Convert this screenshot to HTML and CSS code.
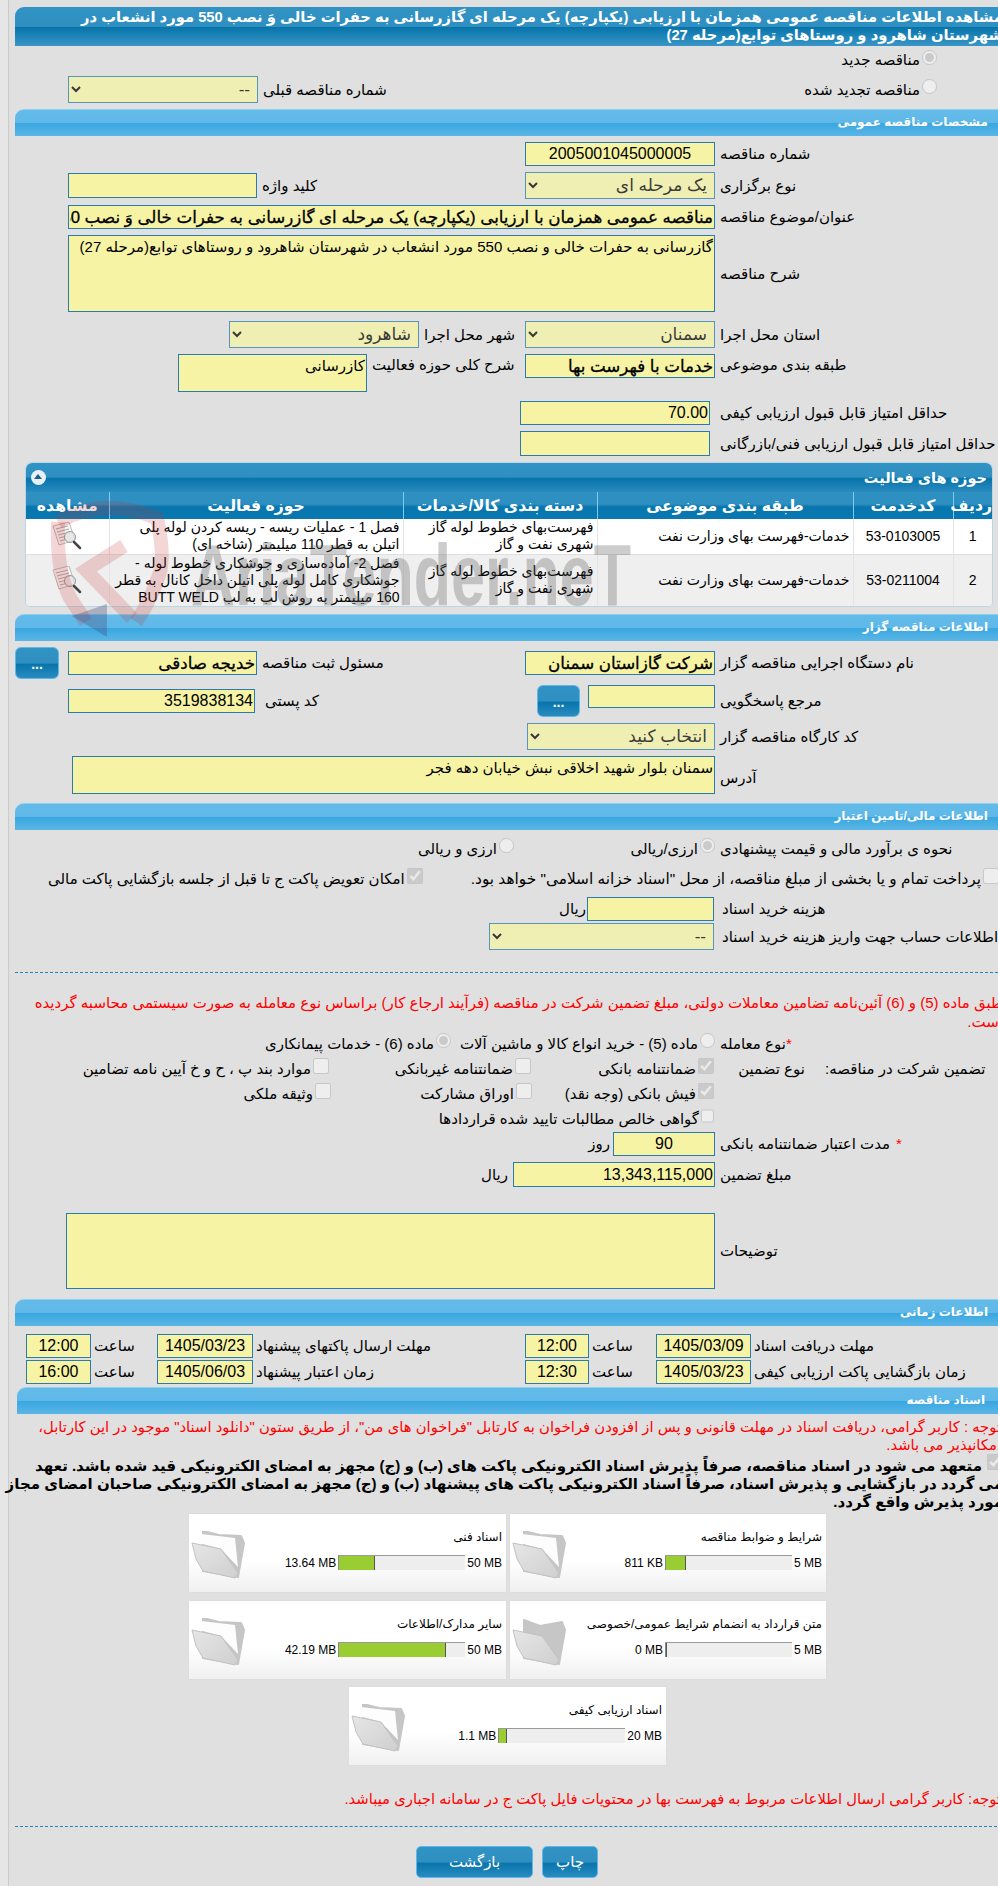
FILE: index.html
```html
<!DOCTYPE html>
<html lang="fa">
<head>
<meta charset="utf-8">
<title>مشاهده اطلاعات مناقصه</title>
<link rel="stylesheet" href="styles.css">
</head>
<body>
<svg class="defs" width="0" height="0">
  <linearGradient id="fg" x1="0" y1="0" x2="1" y2="1">
    <stop offset="0" stop-color="#e6e6e6"/>
    <stop offset="1" stop-color="#cfcfcf"/>
  </linearGradient>
  <symbol id="folder" viewBox="0 0 54 48">
    <path class="fo-back" d="M12 0 28 4 50 5 53 12 47 46 12 40Z"/>
    <path class="fo-page" d="M10 3 44 7 47 36 30 18 8 12Z"/>
    <path class="fo-front" d="M1 12 30 18 47 42 44 47 12 40 5 28Z"/>
  </symbol>
  <symbol id="folder2" viewBox="0 0 54 48">
    <path class="fo-back" d="M12 2 28 8 50 4 53 12 47 46 12 40Z"/>
    <path class="fo-front" d="M1 12 30 18 47 42 44 47 12 40 5 28Z"/>
  </symbol>
  <symbol id="doc" viewBox="0 0 30 28">
    <path class="doc-p" d="M1 4 17 0 23 18 7 23Z"/>
    <path class="doc-l" d="M4 7 16 4M5 10 17 7M6 13 18 10M7 16 13 14.500M8 19 14 17.500"/>
    <circle class="doc-g" cx="18" cy="15" r="5.500"/>
    <path class="doc-h" d="M22 20 28 26"/>
  </symbol>
</svg>
<div class="page">
  <h1 class="head" dir="rtl">مشاهده اطلاعات مناقصه عمومی همزمان با ارزیابی (یکپارچه) یک مرحله ای گازرسانی به حفرات خالی وَ نصب 550 مورد انشعاب در<br>شهرستان شاهرود و روستاهای توابع(مرحله 27)</h1>

  <div class="top-line mt6 h16">
    <span></span>
    <label class="choice"><input type="radio" name="n1" disabled checked><span>مناقصه جدید</span></label>
  </div>
  <div class="top-line mt8 h27">
    <div class="g"><select class="w190 h27" dir="rtl" disabled><option>--</option></select><span class="lb">شماره مناقصه قبلی</span></div>
    <label class="choice"><input type="radio" name="n1" disabled><span>مناقصه تجدید شده</span></label>
  </div>

  <div class="bar mt6">مشخصات مناقصه عمومی</div>

  <div class="row mt6 h24">
    <div class="f"><input class="w190 ctr end" readonly value="2005001045000005"></div>
    <span class="lb">شماره مناقصه</span>
  </div>
  <div class="row mt6 h27">
    <div class="f">
      <div class="g"><input class="w189 h25" readonly><span class="lb">کلید واژه</span></div>
      <select class="w190 h27 end" dir="rtl" disabled><option>یک مرحله ای</option></select>
    </div>
    <span class="lb">نوع برگزاری</span>
  </div>
  <div class="row mt6 h24">
    <div class="f"><input class="grow strong" dir="rtl" readonly value="مناقصه عمومی همزمان با ارزیابی (یکپارچه) یک مرحله ای گازرسانی به حفرات خالی وَ نصب 550 مورد انشعاب در شهرستان شاهرود و روستاهای توابع(مرحله 27)"></div>
    <span class="lb">عنوان/موضوع مناقصه</span>
  </div>
  <div class="row mt6 h77">
    <div class="f"><textarea class="grow h77" dir="rtl" readonly>گازرسانی به حفرات خالی و نصب 550 مورد انشعاب در شهرستان شاهرود و روستاهای توابع(مرحله 27)</textarea></div>
    <span class="lb">شرح مناقصه</span>
  </div>
  <div class="row mt9 h27">
    <div class="f">
      <div class="g ml161"><select class="w190 h27" dir="rtl" disabled><option>شاهرود</option></select><span class="lb">شهر محل اجرا</span></div>
      <select class="w190 h27 end" dir="rtl" disabled><option>سمنان</option></select>
    </div>
    <span class="lb">استان محل اجرا</span>
  </div>
  <div class="row mt6 h38 top">
    <div class="f">
      <div class="g ml110 top"><textarea class="w189 h38" dir="rtl" readonly>کازرسانی</textarea><span class="lb up">شرح کلی حوزه فعالیت</span></div>
      <input class="w190 end strong" dir="rtl" readonly value="خدمات با فهرست بها">
    </div>
    <span class="lb up">طبقه بندی موضوعی</span>
  </div>
  <div class="row mt9 h24">
    <div class="f"><input class="w190 end mr5" dir="rtl" readonly value="70.00"></div>
    <span class="lb">حداقل امتیاز قابل قبول ارزیابی کیفی</span>
  </div>
  <div class="row mt6 h25">
    <div class="f"><input class="w190 h25 end mr5" readonly></div>
    <span class="lb">حداقل امتیاز قابل قبول ارزیابی فنی/بازرگانی</span>
  </div>

  <section class="panel mt6">
    <div class="panel-head" dir="rtl"><span>حوزه های فعالیت</span><i class="collapse"></i></div>
    <table dir="rtl">
      <colgroup><col class="c1"><col class="c2"><col class="c3"><col class="c4"><col class="c5"><col class="c6"></colgroup>
      <thead><tr><th>ردیف</th><th>کدخدمت</th><th>طبقه بندی موضوعی</th><th>دسته بندی کالا/خدمات</th><th>حوزه فعالیت</th><th>مشاهده</th></tr></thead>
      <tbody>
        <tr class="r1"><td class="cc">1</td><td class="cc">53-0103005</td><td>خدمات-فهرست بهای وزارت نفت</td><td>فهرست‌بهای خطوط لوله گاز<br>شهری نفت و گاز</td><td>فصل 1 - عملیات ریسه - ریسه کردن لوله پلی<br>اتیلن به قطر 110 میلیمتر (شاخه ای)</td><td class="cc"><svg class="doc"><use href="#doc"/></svg></td></tr>
        <tr class="r2"><td class="cc">2</td><td class="cc">53-0211004</td><td>خدمات-فهرست بهای وزارت نفت</td><td>فهرست‌بهای خطوط لوله گاز<br>شهری نفت و گاز</td><td>فصل 2- آماده‌سازی و جوشکاری خطوط لوله -<br>جوشکاری کامل لوله پلی اتیلن داخل کانال به قطر<br>160 میلیمتر به روش لب به لب BUTT WELD</td><td class="cc"><svg class="doc"><use href="#doc"/></svg></td></tr>
      </tbody>
    </table>
  </section>

  <div class="bar mt7">اطلاعات مناقصه گزار</div>

  <div class="row mt6 h32">
    <div class="f nopad">
      <div class="g"><button class="dots w44">...</button><input class="w189 strong ml4" dir="rtl" readonly value="خدیجه صادقی"><span class="lb">مسئول ثبت مناقصه</span></div>
      <input class="w190 end strong" dir="rtl" readonly value="شرکت گازاستان سمنان">
    </div>
    <span class="lb">نام دستگاه اجرایی مناقصه گزار</span>
  </div>
  <div class="row mt6 h32">
    <div class="f">
      <div class="g"><input class="w187" dir="rtl" readonly value="3519838134"><span class="lb ml5">کد پستی</span></div>
      <div class="g end top gap8"><button class="dots w43">...</button><input class="w127 h23" readonly></div>
    </div>
    <span class="lb">مرجع پاسخگویی</span>
  </div>
  <div class="row mt6 h27">
    <div class="f"><select class="w188 h27 end" dir="rtl" disabled><option>انتخاب کنید</option></select></div>
    <span class="lb">کد کارگاه مناقصه گزار</span>
  </div>
  <div class="row mt6 h38">
    <div class="f pad57"><textarea class="grow h38" dir="rtl" readonly>سمنان بلوار شهید اخلاقی نبش خیابان دهه فجر</textarea></div>
    <span class="lb dn4">آدرس</span>
  </div>

  <div class="bar mt9">اطلاعات مالی/تامین اعتبار</div>

  <div class="row mt8 h20">
    <div class="f">
      <div class="choices end">
        <label class="choice ch201"><input type="radio" name="n2" disabled checked><span>ارزی/ریالی</span></label>
        <label class="choice"><input type="radio" name="n2" disabled><span>ارزی و ریالی</span></label>
      </div>
    </div>
    <span class="lb">نحوه ی برآورد مالی و قیمت پیشنهادی</span>
  </div>
  <div class="wide mt10 h22">
    <label class="choice"><input type="checkbox" disabled checked><span>امکان تعویض پاکت ج تا قبل از جلسه بازگشایی پاکت مالی</span></label>
    <label class="choice wider"><input type="checkbox" disabled><span>پرداخت تمام و یا بخشی از مبلغ مناقصه، از محل "اسناد خزانه اسلامی" خواهد بود.</span></label>
  </div>
  <div class="row mt7 h24">
    <div class="f"><div class="g end gap1 mr1"><span class="lb">ریال</span><input class="w127" readonly></div></div>
    <span class="lb pl2">هزینه خرید اسناد</span>
  </div>
  <div class="row mt2 h27">
    <div class="f"><select class="w225 h27 end mr1" dir="rtl" disabled><option>--</option></select></div>
    <span class="lb pl2">اطلاعات حساب جهت واریز هزینه خرید اسناد</span>
  </div>

  <hr class="dash mt22">

  <p class="warn mt20">طبق ماده (5) و (6) آئین‌نامه تضامین معاملات دولتی، مبلغ تضمین شرکت در مناقصه (فرآیند ارجاع کار) براساس نوع معامله به صورت سیستمی محاسبه گردیده<br>است.</p>

  <div class="row mt2 h20">
    <div class="f">
      <div class="choices end">
        <label class="choice ch264"><input type="radio" name="n3" disabled><span>ماده (5) - خرید انواع کالا و ماشین آلات</span></label>
        <label class="choice"><input type="radio" name="n3" disabled checked><span>ماده (6) - خدمات پیمانکاری</span></label>
      </div>
    </div>
    <span class="lb"><span class="star">*</span>نوع معامله</span>
  </div>

  <div class="gu mt4">
    <label class="choice pr2"><input type="checkbox" disabled><span>موارد بند پ ، ح و خ آیین نامه تضامین</span></label>
    <label class="choice pr1"><input type="checkbox" disabled><span>ضمانتنامه غیربانکی</span></label>
    <label class="choice"><input type="checkbox" disabled checked><span>ضمانتنامه بانکی</span></label>
    <span class="lb gu-t">نوع تضمین</span>
    <span class="lb gu-o">تضمین شرکت در مناقصه:</span>
  </div>
  <div class="gu mt1">
    <label class="choice"><input type="checkbox" disabled><span>وثیقه ملکی</span></label>
    <label class="choice"><input type="checkbox" disabled><span>اوراق مشارکت</span></label>
    <label class="choice"><input type="checkbox" disabled checked><span>فیش بانکی (وجه نقد)</span></label>
  </div>
  <div class="gu mt1">
    <span></span><span></span>
    <label class="choice"><input type="checkbox" disabled><span>گواهی خالص مطالبات تایید شده قراردادها</span></label>
  </div>

  <div class="row mt1 h24">
    <div class="f"><div class="g end gap3"><span class="lb">روز</span><input class="w102 ctr" readonly value="90"></div></div>
    <span class="lb"><span class="star s2">*</span>مدت اعتبار ضمانتنامه بانکی</span>
  </div>
  <div class="row mt6 h25">
    <div class="f"><div class="g end"><span class="lb">ریال</span><input class="w202 h25" dir="rtl" readonly value="13,343,115,000"></div></div>
    <span class="lb">مبلغ تضمین</span>
  </div>
  <div class="row mt26 h76">
    <div class="f pad51"><textarea class="grow h76" dir="rtl" readonly></textarea></div>
    <span class="lb">توضیحات</span>
  </div>

  <div class="bar mt10">اطلاعات زمانی</div>

  <div class="time mt8">
    <input readonly class="ctr" value="12:00"><span class="lb">ساعت</span>
    <input readonly class="ctr" value="1405/03/23"><span class="lb">مهلت ارسال پاکتهای پیشنهاد</span>
    <input readonly class="ctr" value="12:00"><span class="lb">ساعت</span>
    <input readonly class="ctr" value="1405/03/09"><span class="lb">مهلت دریافت اسناد</span>
  </div>
  <div class="time mt2">
    <input readonly class="ctr" value="16:00"><span class="lb">ساعت</span>
    <input readonly class="ctr" value="1405/06/03"><span class="lb">زمان اعتبار پیشنهاد</span>
    <input readonly class="ctr" value="12:30"><span class="lb">ساعت</span>
    <input readonly class="ctr" value="1405/03/23"><span class="lb">زمان بازگشایی پاکت ارزیابی کیفی</span>
  </div>

  <div class="bar bar5 mt3">اسناد مناقصه</div>

  <p class="warn note mt4">توجه : کاربر گرامی، دریافت اسناد در مهلت قانونی و پس از افزودن فراخوان به کارتابل "فراخوان های من"، از طریق ستون "دانلود اسناد" موجود در این کارتابل،<br>امکانپذیر می باشد.</p>

  <div class="pledge mt3" dir="rtl"><input type="checkbox" disabled checked>متعهد می شود در اسناد مناقصه، صرفاً پذیرش اسناد الکترونیکی پاکت های (ب) و (ج) مجهز به امضای الکترونیکی قید شده باشد. تعهد<br>می گردد در بازگشایی و پذیرش اسناد، صرفاً اسناد الکترونیکی پاکت های پیشنهاد (ب) و (ج) مجهز به امضای الکترونیکی صاحبان امضای مجاز<br>مورد پذیرش واقع گردد.</div>

  <div class="cards mt3">
    <article class="card w317">
      <svg class="folder"><use href="#folder"/></svg>
      <div class="card-b"><div class="t" dir="rtl">اسناد فنی</div>
        <div class="prog"><span>13.64 MB</span><div class="track"><div class="fill" style="width:37px"></div></div><span>50 MB</span></div></div>
    </article>
    <article class="card">
      <svg class="folder"><use href="#folder"/></svg>
      <div class="card-b"><div class="t" dir="rtl">شرایط و ضوابط مناقصه</div>
        <div class="prog"><span>811 KB</span><div class="track"><div class="fill" style="width:21px"></div></div><span>5 MB</span></div></div>
    </article>
  </div>
  <div class="cards mt9">
    <article class="card w317">
      <svg class="folder"><use href="#folder"/></svg>
      <div class="card-b"><div class="t" dir="rtl">سایر مدارک/اطلاعات</div>
        <div class="prog"><span>42.19 MB</span><div class="track"><div class="fill" style="width:108px"></div></div><span>50 MB</span></div></div>
    </article>
    <article class="card">
      <svg class="folder"><use href="#folder2"/></svg>
      <div class="card-b"><div class="t" dir="rtl">متن قرارداد به انضمام شرایط عمومی/خصوصی</div>
        <div class="prog"><span>0 MB</span><div class="track"><div class="fill" style="width:0"></div></div><span>5 MB</span></div></div>
    </article>
  </div>
  <div class="cards mt8">
    <article class="card w317">
      <svg class="folder"><use href="#folder"/></svg>
      <div class="card-b"><div class="t" dir="rtl">اسناد ارزیابی کیفی</div>
        <div class="prog"><span>1.1 MB</span><div class="track"><div class="fill" style="width:9px"></div></div><span>20 MB</span></div></div>
    </article>
  </div>

  <p class="warn note mt25">توجه: کاربر گرامی ارسال اطلاعات مربوط به فهرست بها در محتویات فایل پاکت ج در سامانه اجباری میباشد.</p>

  <hr class="dash dash2 mt18">

  <div class="actions mt19">
    <button class="act w117">بازگشت</button>
    <button class="act w56">چاپ</button>
  </div>
</div>

<svg class="wm" viewBox="0 0 998 660" aria-hidden="true">
  <path class="wm-r" d="M58 522Q103 496 157 518Q166 560 158 578Q150 602 136 622"/>
  <path class="wm-r" d="M58 522Q56 570 70 598L86 622"/>
  <path class="wm-r" d="M124 546 86 570 132 618"/>
  <path class="wm-a" d="M72 616 107 604 107 637Z"/>
  <text class="wm-t" x="191" y="605" textLength="440" lengthAdjust="spacingAndGlyphs">AriaTender.neT</text>
</svg>
</body>
</html>
```
FILE: styles.css
```css
html, body { margin: 0; padding: 0; }
html { overflow: hidden; }
body {
  position: relative;
  width: 998px;
  height: 1886px;
  overflow: hidden;
  background: #e0e0e0;
  color: #000;
  font: 15px "Liberation Sans", "DejaVu Sans", sans-serif;
}
body::before {
  content: "";
  position: absolute;
  left: 0; top: 0; bottom: 0;
  width: 8px;
  background: #e6e6e6;
  border-right: 1px solid #cbcbcb;
}
.defs { position: absolute; }
.page { position: relative; margin-left: 15px; width: 988px; padding-top: 7px; }

/* spacing helpers */
.mt1{margin-top:1px}.mt2{margin-top:2px}.mt3{margin-top:3px}.mt4{margin-top:4px}.mt6{margin-top:6px}.mt7{margin-top:7px}.mt8{margin-top:8px}.mt9{margin-top:9px}.mt10{margin-top:10px}.mt18{margin-top:18px}.mt19{margin-top:19px}.mt20{margin-top:20px}.mt22{margin-top:22px}.mt25{margin-top:25px}.mt26{margin-top:26px}
.h16{height:16px}.h20{height:20px}.h22{height:22px}.h23{height:23px}.h24{height:24px}.h25{height:25px}.h27{height:27px}.h32{height:32px}.h38{height:38px}.h76{height:76px}.h77{height:77px}
.w102{width:102px}.w127{width:127px}.w187{width:187px}.w188{width:188px}.w189{width:189px}.w190{width:190px}.w202{width:202px}.w225{width:225px}
.ml4{margin-left:4px}.ml5{margin-left:5px}.ml110{margin-left:110px}.ml161{margin-left:161px}
.mr1{margin-right:1px}.mr5{margin-right:5px}

.head {
  margin: 0;
  height: 39px;
  border-top-left-radius: 9px;
  background: linear-gradient(#3192c4 0, #2e8fc0 50%, #0674ab 52%, #3a96c6 100%);
  color: #fff;
  font-size: 14.750px;
  font-weight: 700;
  line-height: 18px;
  padding-top: 1px;
  box-sizing: border-box;
  white-space: nowrap;
  text-align: right;
}
.bar {
  height: 27px;
  box-sizing: border-box;
  border-top-left-radius: 9px;
  border-top: 1px solid #8cd0f2;
  background: linear-gradient(#63bbe9 0, #5fb8e8 48%, #39a7e0 52%, #5bb6e6 100%);
  color: #fff;
  font-size: 12px;
  font-weight: 700;
  line-height: 24px;
  direction: rtl;
  padding-right: 15px;
}
.bar5 { margin-left: 2px; padding-right: 18px; }

.top-line { display: flex; justify-content: space-between; align-items: center; padding: 0 66px 0 53px; }
.row { display: grid; grid-template-columns: 700px max-content; column-gap: 5px; align-items: center; }
.row.top { align-items: start; }
.f { display: flex; align-items: center; padding-left: 53px; }
.f.nopad { padding-left: 0; }
.f.pad57 { padding-left: 57px; }
.f.pad51 { padding-left: 51px; }
.g { display: flex; align-items: center; gap: 5px; }
.g.top, .row.top .f { align-items: flex-start; }
.gap1 { gap: 1px; }
.gap3 { gap: 3px; }
.gap8 { gap: 8px; }
.end { margin-left: auto; }
.grow { flex: 1; min-width: 0; }

.lb { direction: rtl; text-align: left; white-space: nowrap; line-height: 20px; font-size: 15px; }
.lb.up { margin-top: 1px; }
.lb.dn4 { position: relative; top: 3px; }
.pl2 { padding-left: 2px; }
.star { color: #f00; }
.s2 { margin-left: 6px; }

input, select, textarea {
  box-sizing: border-box;
  margin: 0;
  font: 16px "Liberation Sans", "DejaVu Sans", sans-serif;
  color: #000;
  background: #f6f4a4;
  border: 1px solid #2b7cae;
  border-radius: 0;
  padding: 0 1px;
  outline: none;
}
input:not([type]) , input.ctr { height: 24px; }
input.h25 { height: 25px; }
input.h23 { height: 23px; }
input.grow { height: 24px; }
.ctr { text-align: center; }
.strong { -webkit-text-stroke: .3px #000; font-size: 16.700px; }
select { padding: 0 3px; font-size: 17px; }
select:disabled { color: #000; opacity: .75; }
textarea { resize: none; overflow: hidden; font-size: 15px; padding: 1px; line-height: 19px; }

.choice { display: flex; align-items: center; direction: rtl; white-space: nowrap; gap: 2px; font-size: 15px; }
.choice input[type=radio] { width: 15px; height: 15px; margin: 0 0 6px 0; }
.choice input[type=checkbox] { width: 16px; height: 16px; margin: 0 0 6px 0; }
.choice.wider { font-size: 15.350px; }
.choices { display: flex; direction: rtl; }
.ch201 { width: 201px; }
.ch264 { width: 264px; }
.wide { display: flex; justify-content: space-between; padding: 0 4px 0 33px; align-items: center; }

.panel {
  margin-left: 10px;
  width: 968px;
  box-sizing: border-box;
  border: 1px solid #b9d6e6;
  border-radius: 7px 7px 5px 5px;
  overflow: hidden;
  background: #fff;
}
.panel-head {
  height: 29px;
  background: linear-gradient(#3192c4 0, #2e8fc0 48%, #0674ab 54%, #2a8bbf 100%);
  color: #fff;
  font-weight: 700;
  font-size: 14.500px;
  display: flex;
  justify-content: space-between;
  align-items: center;
  padding: 0 5px 0 5px;
}
.collapse {
  width: 15px; height: 15px;
  border-radius: 50%;
  background: #e6f0f5;
  position: relative;
}
.collapse::after {
  content: "";
  position: absolute;
  left: 3px; top: 4px;
  border: 4.500px solid transparent;
  border-top: 0;
  border-bottom: 5px solid #1b5e86;
}
table { border-collapse: collapse; width: 100%; table-layout: fixed; font-size: 14px; }
.c1{width:39px}.c2{width:100px}.c3{width:256px}.c4{width:194px}.c5{width:294px}.c6{width:auto}
th {
  height: 27px;
  padding: 0;
  background: linear-gradient(#2f90c2 0, #2e8ec0 45%, #0876ae 55%, #0a78b0 100%);
  color: #fff;
  font-size: 15.700px;
  font-weight: 700;
  border-left: 1px solid #7fcdee;
}
th:last-child { border-left: 0; }
td {
  padding: 0 3px;
  line-height: 17px;
  border-left: 1px solid #e4e4e4;
  text-align: right;
  white-space: nowrap;
}
td:last-child { border-left: 0; }
td.cc { text-align: center; padding: 0; }
.r1 { background: #fff; height: 35px; }
.r2 { background: #efefef; height: 52px; border-top: 1px solid #e0e0e0; }
.doc { width: 30px; height: 28px; display: block; margin: 0 auto; }
.doc-p { fill: #f6f6f6; stroke: #aaa; stroke-width: .8; }
.doc-l { stroke: #aaa; stroke-width: 1; fill: none; }
.doc-g { fill: rgba(225,225,225,.7); stroke: #9a9a9a; stroke-width: 1; }
.doc-h { stroke: #444; stroke-width: 2.500; stroke-linecap: round; }

.dots, .act {
  box-sizing: border-box;
  border: 1px solid #5cb8e8;
  border-radius: 6px;
  background: linear-gradient(#3192c4 0, #2e8fc0 50%, #0875ac 54%, #2a8bbf 100%);
  color: #fff;
  font: 700 14px "Liberation Sans", "DejaVu Sans", sans-serif;
  padding: 0;
}
.dots { height: 32px; line-height: 32px; }
.w44 { width: 44px; }
.w43 { width: 43px; }

.dash { height: 0; border: 0; border-top: 1px dashed #1f86bb; margin-bottom: 0; margin-left: 0; margin-right: 0; }
.dash2 { margin-right: 6px; }
.warn { margin-bottom: 0; margin-left: 0; margin-right: 0; color: #f00; direction: rtl; white-space: nowrap; line-height: 19px; font-size: 15px; }
.note { line-height: 18px; margin-right: 2px; font-size: 14.800px; }
.warn.mt20 { margin-top: 20px; }

.gu { display: grid; grid-template-columns: 316px 201px 182px 26px 65px 20px max-content; height: 24px; align-items: center; }
.pr2 { padding-right: 2px; }
.pr1 { padding-right: 1px; }
.gu-t { grid-column: 5; }
.gu-o { grid-column: 7; }

.time { display: grid; grid-template-columns: 65px 66px 96px 272px 64px 67px 95px max-content; padding-left: 11px; align-items: center; height: 24px; }
.time .lb { padding-left: 3px; }
.time input { width: 100%; padding: 0; }

.pledge { font-size: 15px; font-weight: 700; line-height: 18px; white-space: nowrap; }
.pledge input { width: 16px; height: 16px; margin: -3px 0 0 5px; vertical-align: top; }

.cards { display: flex; justify-content: center; gap: 4px; width: 985px; }
.card {
  width: 316px;
  height: 78px;
  box-sizing: border-box;
  display: flex;
  background: linear-gradient(#fff 60%, #f0f0f0);
  box-shadow: 0 0 1px #d0d0d0;
  padding: 17px 4px 0 2px;
}
.card.w317 { width: 317px; }
.folder { width: 54px; height: 48px; flex: none; }
.fo-back { fill: #c6c6c6; stroke: #c6c6c6; stroke-width: 2; stroke-linejoin: round; }
.fo-page { fill: #fdfdfd; }
.fo-front { fill: url(#fg); stroke: #c2c2c2; stroke-width: 1; stroke-linejoin: round; }
.card-b { flex: 1; min-width: 0; display: flex; flex-direction: column; }
.t { font-size: 12px; line-height: 18px; white-space: nowrap; margin-top: -3px; }
.prog { display: flex; justify-content: flex-end; align-items: center; gap: 2px; margin-top: 9px; font-size: 12px; }
.track { width: 127px; height: 15px; background: #eee; border-top: 1px solid #9a9a9a; box-sizing: border-box; }
.fill { height: 14px; background: #9acd32; border-left: 1px solid #888; border-right: 1px solid #555; box-sizing: border-box; }

.actions { display: flex; gap: 9px; padding-left: 401px; }
.act { height: 32px; font-size: 15px; font-weight: 400; border-radius: 5px; }
.w117 { width: 117px; }
.w56 { width: 56px; }

.wm { position: absolute; left: 0; top: 0; width: 998px; height: 660px; pointer-events: none; }
.wm-r { fill: none; stroke: rgba(200, 50, 50, .2); stroke-width: 14; }
.wm-a { fill: rgba(70, 80, 130, .35); }
.wm-t { font: 700 88px "Liberation Sans", sans-serif; fill: rgba(90, 90, 90, .3); }
```
